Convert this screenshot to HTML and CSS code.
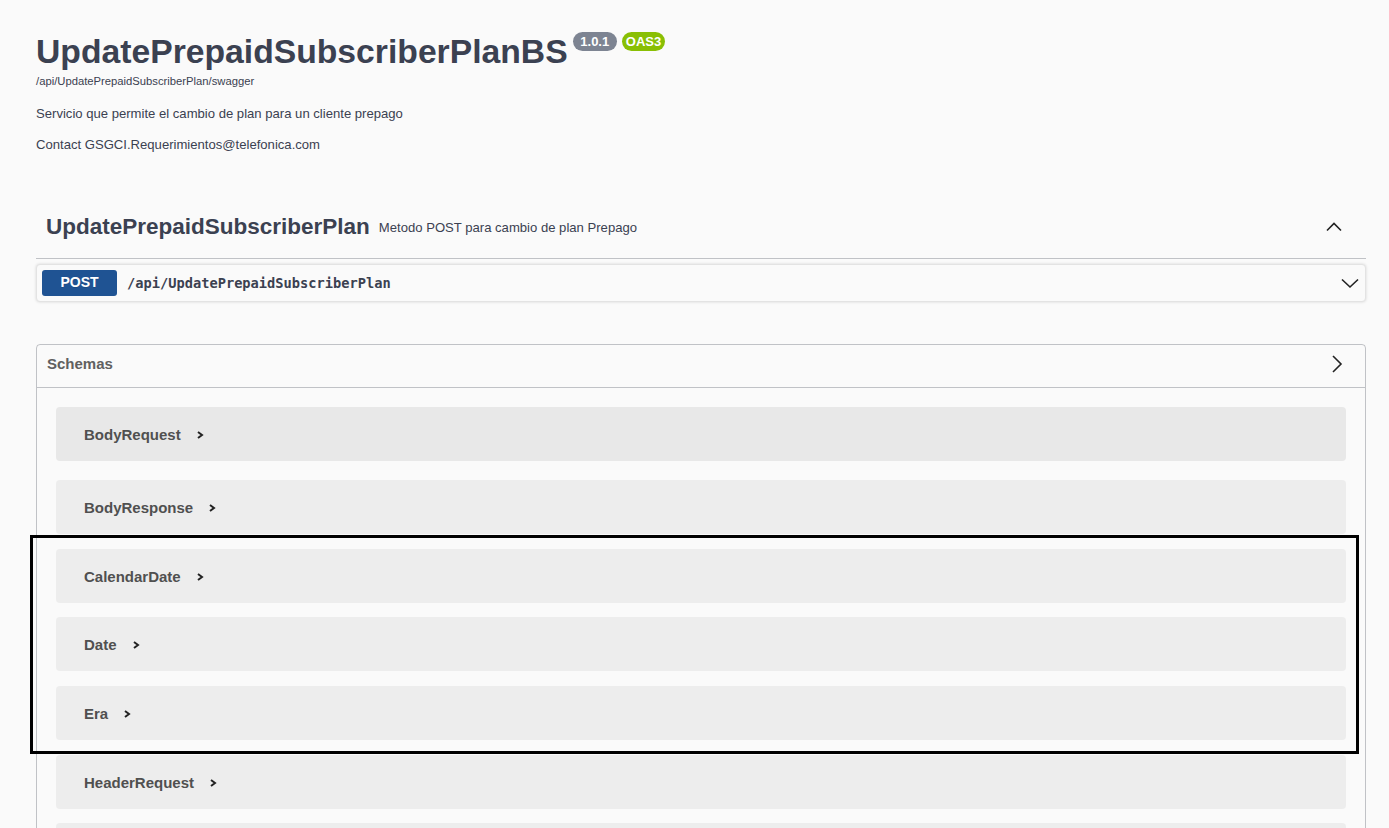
FILE: index.html
```html
<!DOCTYPE html>
<html lang="es">
<head>
<meta charset="utf-8">
<title>UpdatePrepaidSubscriberPlanBS</title>
<link rel="stylesheet" href="styles.css">
</head>
<body>
<div class="wrapper">
  <section class="info">
    <div class="title-row">
      <h2 class="title">UpdatePrepaidSubscriberPlanBS</h2>
      <span class="badge badge-version"> 1.0.1 </span>
      <span class="badge badge-oas">OAS3</span>
    </div>
    <div class="base-url">/api/UpdatePrepaidSubscriberPlan/swagger</div>
    <p class="desc">Servicio que permite el cambio de plan para un cliente prepago</p>
    <p class="desc">Contact GSGCI.Requerimientos@telefonica.com</p>
  </section>

  <section class="tag-section">
    <div class="tag-header">
      <span class="tag-name">UpdatePrepaidSubscriberPlan</span>
      <span class="tag-desc">Metodo POST para cambio de plan Prepago</span>
      <svg class="tag-arrow" width="20" height="20" viewBox="0 0 20 20"><path d="M3 13.5 L10 6.5 L17 13.5" fill="none" stroke="#222" stroke-width="1.6"/></svg>
    </div>
    <div class="opblock">
      <span class="method">POST</span>
      <span class="path">/api/UpdatePrepaidSubscriberPlan</span>
      <svg class="op-arrow" width="20" height="20" viewBox="0 0 20 20"><path d="M2 6.5 L10 14 L18 6.5" fill="none" stroke="#222" stroke-width="1.6"/></svg>
    </div>
  </section>

  <section class="models">
    <div class="models-header">
      <span>Schemas</span>
      <svg class="models-arrow" width="20" height="20" viewBox="0 0 20 20"><path d="M6 2 L14 10 L6 18" fill="none" stroke="#222" stroke-width="1.6"/></svg>
    </div>
    <div class="models-list">
      <div class="model model-first"><span class="model-name">BodyRequest</span><svg class="model-arrow" width="10" height="10" viewBox="0 0 10 10"><path d="M3 2 L7 5 L3 8" fill="none" stroke="#222" stroke-width="2"/></svg></div>
      <div class="model"><span class="model-name">BodyResponse</span><svg class="model-arrow" width="10" height="10" viewBox="0 0 10 10"><path d="M3 2 L7 5 L3 8" fill="none" stroke="#222" stroke-width="2"/></svg></div>
      <div class="model model-tight"><span class="model-name">CalendarDate</span><svg class="model-arrow" width="10" height="10" viewBox="0 0 10 10"><path d="M3 2 L7 5 L3 8" fill="none" stroke="#222" stroke-width="2"/></svg></div>
      <div class="model"><span class="model-name">Date</span><svg class="model-arrow" width="10" height="10" viewBox="0 0 10 10"><path d="M3 2 L7 5 L3 8" fill="none" stroke="#222" stroke-width="2"/></svg></div>
      <div class="model"><span class="model-name">Era</span><svg class="model-arrow" width="10" height="10" viewBox="0 0 10 10"><path d="M3 2 L7 5 L3 8" fill="none" stroke="#222" stroke-width="2"/></svg></div>
      <div class="model model-tight"><span class="model-name">HeaderRequest</span><svg class="model-arrow" width="10" height="10" viewBox="0 0 10 10"><path d="M3 2 L7 5 L3 8" fill="none" stroke="#222" stroke-width="2"/></svg></div>
      <div class="model model-last"></div>
    </div>
  </section>
</div>
<div class="highlight"></div>
</body>
</html>
```

FILE: styles.css
```css
html, body {
  margin: 0;
  padding: 0;
  background: #fafafa;
  font-family: "Liberation Sans", Arial, sans-serif;
  color: #3b4151;
  overflow: hidden;
  height: 828px;
}

.wrapper {
  width: 1330px;
  margin-left: 36px;
}

.info {
  padding-top: 29px;
}

.title-row {
  display: flex;
  align-items: flex-start;
}

.title {
  margin: 0;
  font-size: 33.7px;
  line-height: 44px;
  font-weight: bold;
  color: #3b4151;
}

.badge {
  display: inline-block;
  margin-top: 3px;
  height: 19px;
  line-height: 19px;
  padding: 0 4px;
  border-radius: 57px;
  font-size: 13px;
  font-weight: bold;
  color: #fff;
  white-space: pre;
}

.badge-version {
  margin-left: 5px;
  background: #7d8492;
}

.badge-oas {
  margin-left: 5px;
  background: #89bf04;
}

.base-url {
  font-size: 11.25px;
  line-height: 14px;
  margin-top: 1px;
  color: #3b4151;
}

.desc {
  margin: 18px 0 0 0;
  font-size: 13.1px;
  line-height: 16px;
}

.desc + .desc {
  margin-top: 15px;
}

.tag-section {
  margin-top: 45px;
}

.tag-header {
  display: flex;
  align-items: center;
  height: 57px;
  padding: 0 20px 3px 10px;
  border-bottom: 1px solid rgba(59, 65, 81, 0.3);
}

.tag-name {
  font-size: 22.5px;
  font-weight: bold;
}

.tag-desc {
  font-size: 13.1px;
  margin-left: 9px;
  margin-top: 2px;
}

.tag-arrow {
  margin-left: auto;
  margin-right: 2px;
}

.opblock {
  display: flex;
  align-items: center;
  margin-top: 5px;
  height: 36px;
  padding: 0 5px;
  background: #fafafa;
  border: 1px solid #e3e3e3;
  border-radius: 4px;
  box-shadow: 0 0 3px rgba(0, 0, 0, 0.15);
}

.method {
  width: 75px;
  height: 26px;
  line-height: 25px;
  text-align: center;
  background: #1f5393;
  color: #fff;
  font-size: 14px;
  font-weight: bold;
  border-radius: 3px;
  text-shadow: 0 1px 0 rgba(0, 0, 0, 0.1);
}

.path {
  margin-left: 10px;
  font-family: "DejaVu Sans Mono", "Liberation Mono", monospace;
  font-weight: bold;
  font-size: 13.7px;
  color: #3b4151;
}

.op-arrow {
  margin-left: auto;
  margin-right: 0;
}

.models {
  margin-top: 42px;
  border: 1px solid rgba(59, 65, 81, 0.3);
  border-radius: 4px;
}

.models-header {
  display: flex;
  align-items: center;
  height: 37px;
  padding: 0 18px 5px 10px;
  border-bottom: 1px solid rgba(59, 65, 81, 0.3);
  font-size: 15px;
  font-weight: bold;
  color: #606060;
}

.models-arrow {
  margin-left: auto;
  margin-right: 0;
}

.models-list {
  padding: 19px 19px 0 19px;
}

.model {
  display: flex;
  align-items: center;
  height: 54px;
  padding-left: 28px;
  margin-bottom: 15px;
  background: #ededed;
  border-radius: 4px;
}

.model-first {
  background: #e8e8e8;
  margin-bottom: 19px;
}

.model-tight {
  margin-bottom: 14px;
}

.model-name {
  font-size: 15px;
  font-weight: bold;
  color: #505050;
}

.model-arrow {
  margin-left: 14px;
  margin-top: 2px;
}

.highlight {
  position: absolute;
  left: 30px;
  top: 535px;
  width: 1323px;
  height: 213px;
  border: 3px solid #000;
}
```
